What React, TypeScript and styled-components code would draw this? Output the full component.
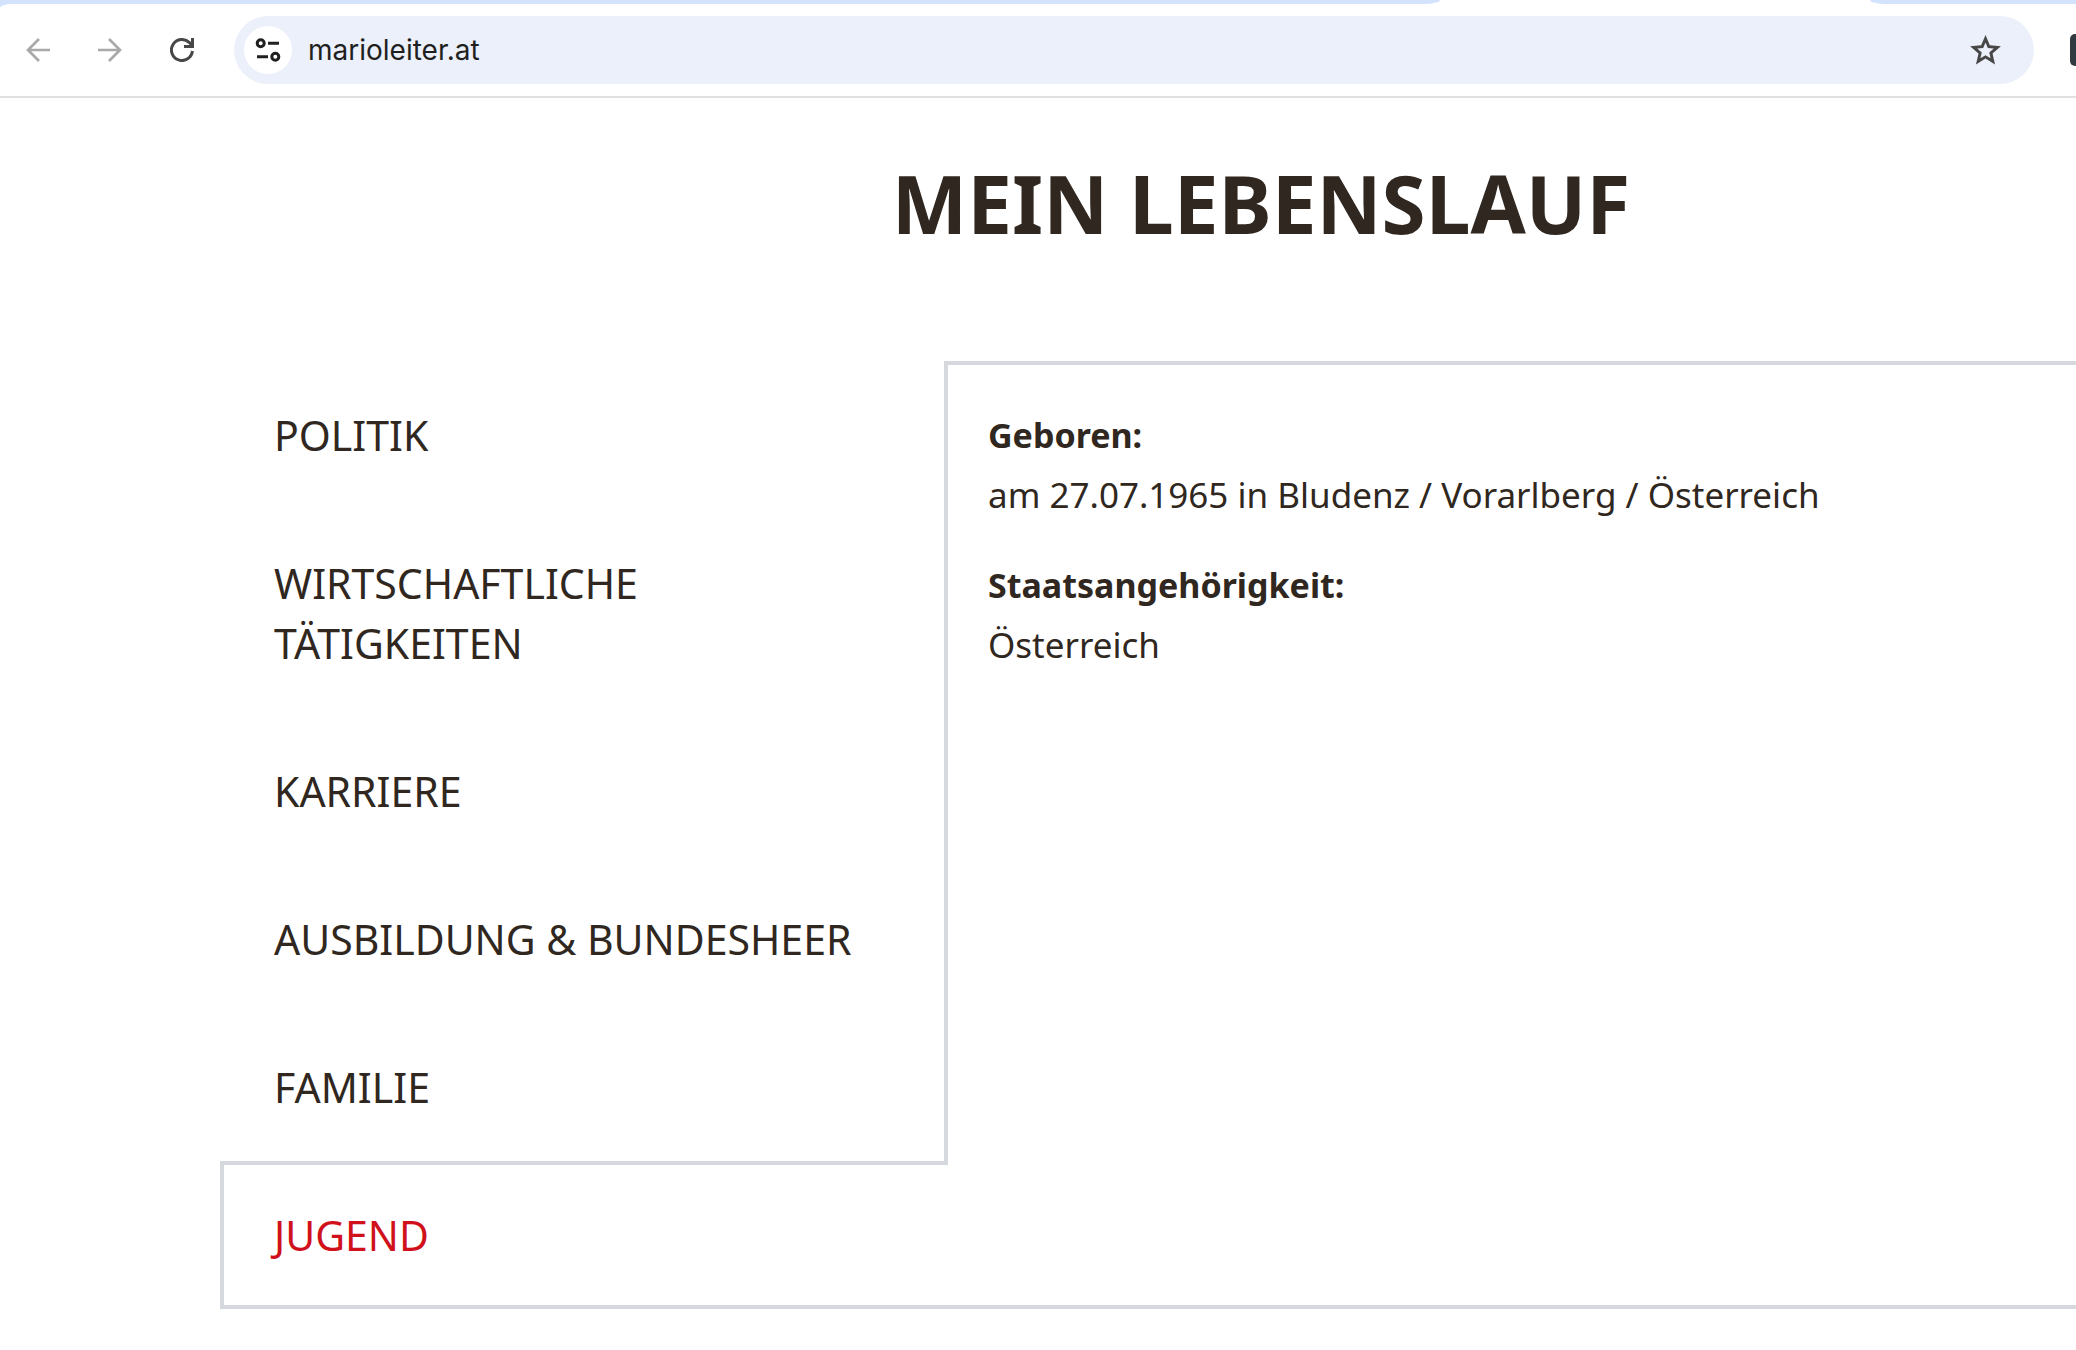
import React, { useState } from "react";
import styled, { createGlobalStyle, css } from "styled-components";

const ink = "#2f2720";
const line = "#d5d8dd";
const tabBlue = "#d3e3fd";

const GlobalStyle = createGlobalStyle`
  *, *::before, *::after { box-sizing: border-box; }
  body {
    margin: 0;
    background: #fff;
    color: ${ink};
    font-family: "Noto Sans", sans-serif;
    overflow-x: hidden;
  }
`;

const BrowserHeader = styled.header`
  background: ${tabBlue};
`;

const TabStrip = styled.div`
  display: flex;
  height: 4px;
  background: #fff;
`;

const InactiveTabs = styled.div<{ $side: "left" | "right" }>`
  background: ${tabBlue};
  ${({ $side }) =>
    $side === "left"
      ? css`
          flex: 0 0 1440px;
          border-bottom-right-radius: 16px 4px;
        `
      : css`
          flex: 1;
          border-bottom-left-radius: 16px 4px;
        `}
`;

const ActiveTab = styled.div`
  flex: 0 0 430px;
`;

const Toolbar = styled.div`
  display: flex;
  align-items: center;
  height: 94px;
  padding-left: 26px;
  background: #fff;
  border-bottom: 2px solid #e0e0e0;
  border-top-left-radius: 12px 4px;
`;

const NavButtons = styled.div`
  display: flex;
  gap: 48px;
  margin-right: 40px;
`;

const IconButton = styled.button<{ $tone?: string }>`
  display: flex;
  padding: 0;
  border: 0;
  background: none;
  color: ${({ $tone }) => $tone ?? "#474747"};
  cursor: pointer;
`;

const AddressBar = styled.form`
  display: flex;
  flex: 1;
  align-items: center;
  height: 68px;
  padding: 0 30px 0 10px;
  border-radius: 34px;
  background: #ecf0fa;
`;

const SiteInfo = styled(IconButton)`
  align-items: center;
  justify-content: center;
  width: 48px;
  height: 48px;
  border-radius: 50%;
  background: #fff;
`;

const Address = styled.input`
  flex: 1;
  min-width: 0;
  padding: 0 16px;
  border: 0;
  outline: 0;
  background: none;
  color: #1f1f1f;
  font: 400 28px/40px Inter, sans-serif;
`;

const Extension = styled.button`
  width: 6px;
  height: 32px;
  margin-left: 36px;
  padding: 0;
  border: 0;
  border-radius: 5px 0 0 5px;
  background: #303a40;
`;

const Page = styled.main`
  padding: 65px 0 40px 220px;
`;

const Title = styled.h1`
  margin: 0 0 118px;
  padding-left: 226px;
  font-size: 80px;
  font-weight: 700;
  line-height: 80px;
  text-align: center;
  white-space: nowrap;
`;

const Resume = styled.section`
  display: flex;
`;

const TabList = styled.div`
  display: flex;
  flex: 0 0 728px;
  flex-direction: column;
`;

const Tab = styled.button<{ $active: boolean }>`
  border: 0 solid ${line};
  background: none;
  font: 400 41px/60px "Noto Sans", sans-serif;
  text-align: left;
  text-transform: uppercase;
  cursor: pointer;
  ${({ $active }) =>
    $active
      ? css`
          padding: 40px 70px 40px 50px;
          border-width: 4px 0 4px 4px;
          color: #d0111b;
        `
      : css`
          padding: 44px 70px 44px 54px;
          border-right-width: 4px;
          color: ${ink};
        `}
`;

const Panel = styled.div`
  flex: 1;
  min-width: 0;
  padding: 40px;
  border: solid ${line};
  border-width: 4px 0;
`;

const Facts = styled.dl`
  display: grid;
  gap: 30px;
  margin: 0;
  font-size: 35px;
  line-height: 60px;
`;

const Label = styled.dt`
  font-size: 34px;
  font-weight: 700;
`;

const Value = styled.dd`
  margin: 0;
`;

const BackIcon = () => (
  <svg width="24" height="24" viewBox="0 0 24 24" fill="none" stroke="currentColor" strokeWidth="2.7">
    <path d="M24 12H2M13 1 2 12l11 11" />
  </svg>
);

const ForwardIcon = () => (
  <svg width="24" height="24" viewBox="0 0 24 24" fill="none" stroke="currentColor" strokeWidth="2.7">
    <path d="M0 12h22M11 1l11 11-11 11" />
  </svg>
);

const ReloadIcon = () => (
  <svg width="24" height="24" viewBox="0 0 24 24" fill="none" stroke="currentColor" strokeWidth="3">
    <path d="M22.4 13A10.5 10.5 0 1 1 19.4 4.6L22 7.5" />
    <path d="M22.5 0v8.5H14" />
  </svg>
);

const TuneIcon = () => (
  <svg width="26" height="26" viewBox="0 0 26 26" fill="none" stroke="#1f1f1f" strokeWidth="3">
    <circle cx="5.7" cy="6.3" r="3.5" />
    <path d="M13 6.3h11M2 19.7h11" />
    <circle cx="20.3" cy="19.7" r="3.5" />
  </svg>
);

const StarIcon = () => (
  <svg width="37" height="37" viewBox="0 0 24 24" fill="currentColor" fillRule="evenodd">
    <path d="M22 9.24l-7.19-.62L12 2 9.19 8.63 2 9.24l5.46 4.73L5.82 21 12 17.27 18.18 21l-1.63-7.03L22 9.24zM12 15L8.7 17l.87-3.76-2.92-2.53 3.85-.33L12 6.83l1.5 3.55 3.85.33-2.92 2.53.87 3.76L12 15z" />
  </svg>
);

const sections = [
  "Politik",
  "Wirtschaftliche Tätigkeiten",
  "Karriere",
  "Ausbildung & Bundesheer",
  "Familie",
  "Jugend",
];

const facts = [
  { label: "Geboren:", value: "am 27.07.1965 in Bludenz / Vorarlberg / Österreich" },
  { label: "Staatsangehörigkeit:", value: "Österreich" },
];

export default function App() {
  const [active, setActive] = useState("Jugend");

  return (
    <>
      <GlobalStyle />
      <BrowserHeader>
        <TabStrip>
          <InactiveTabs $side="left" />
          <ActiveTab />
          <InactiveTabs $side="right" />
        </TabStrip>
        <Toolbar>
          <NavButtons>
            <IconButton type="button" aria-label="Zurück" $tone="#a9a9a9">
              <BackIcon />
            </IconButton>
            <IconButton type="button" aria-label="Vorwärts" $tone="#a9a9a9">
              <ForwardIcon />
            </IconButton>
            <IconButton type="button" aria-label="Neu laden">
              <ReloadIcon />
            </IconButton>
          </NavButtons>
          <AddressBar onSubmit={(event) => event.preventDefault()}>
            <SiteInfo type="button" aria-label="Websiteinformationen">
              <TuneIcon />
            </SiteInfo>
            <Address aria-label="Adresse" defaultValue="marioleiter.at" spellCheck={false} />
            <IconButton type="button" aria-label="Lesezeichen setzen">
              <StarIcon />
            </IconButton>
          </AddressBar>
          <Extension type="button" aria-label="Erweiterung" />
        </Toolbar>
      </BrowserHeader>
      <Page>
        <Title>MEIN LEBENSLAUF</Title>
        <Resume>
          <TabList role="tablist" aria-orientation="vertical">
            {sections.map((name) => (
              <Tab
                key={name}
                type="button"
                role="tab"
                aria-selected={name === active}
                $active={name === active}
                onClick={() => setActive(name)}
              >
                {name}
              </Tab>
            ))}
          </TabList>
          <Panel role="tabpanel" aria-label={active}>
            <Facts>
              {facts.map(({ label, value }) => (
                <div key={label}>
                  <Label>{label}</Label>
                  <Value>{value}</Value>
                </div>
              ))}
            </Facts>
          </Panel>
        </Resume>
      </Page>
    </>
  );
}
